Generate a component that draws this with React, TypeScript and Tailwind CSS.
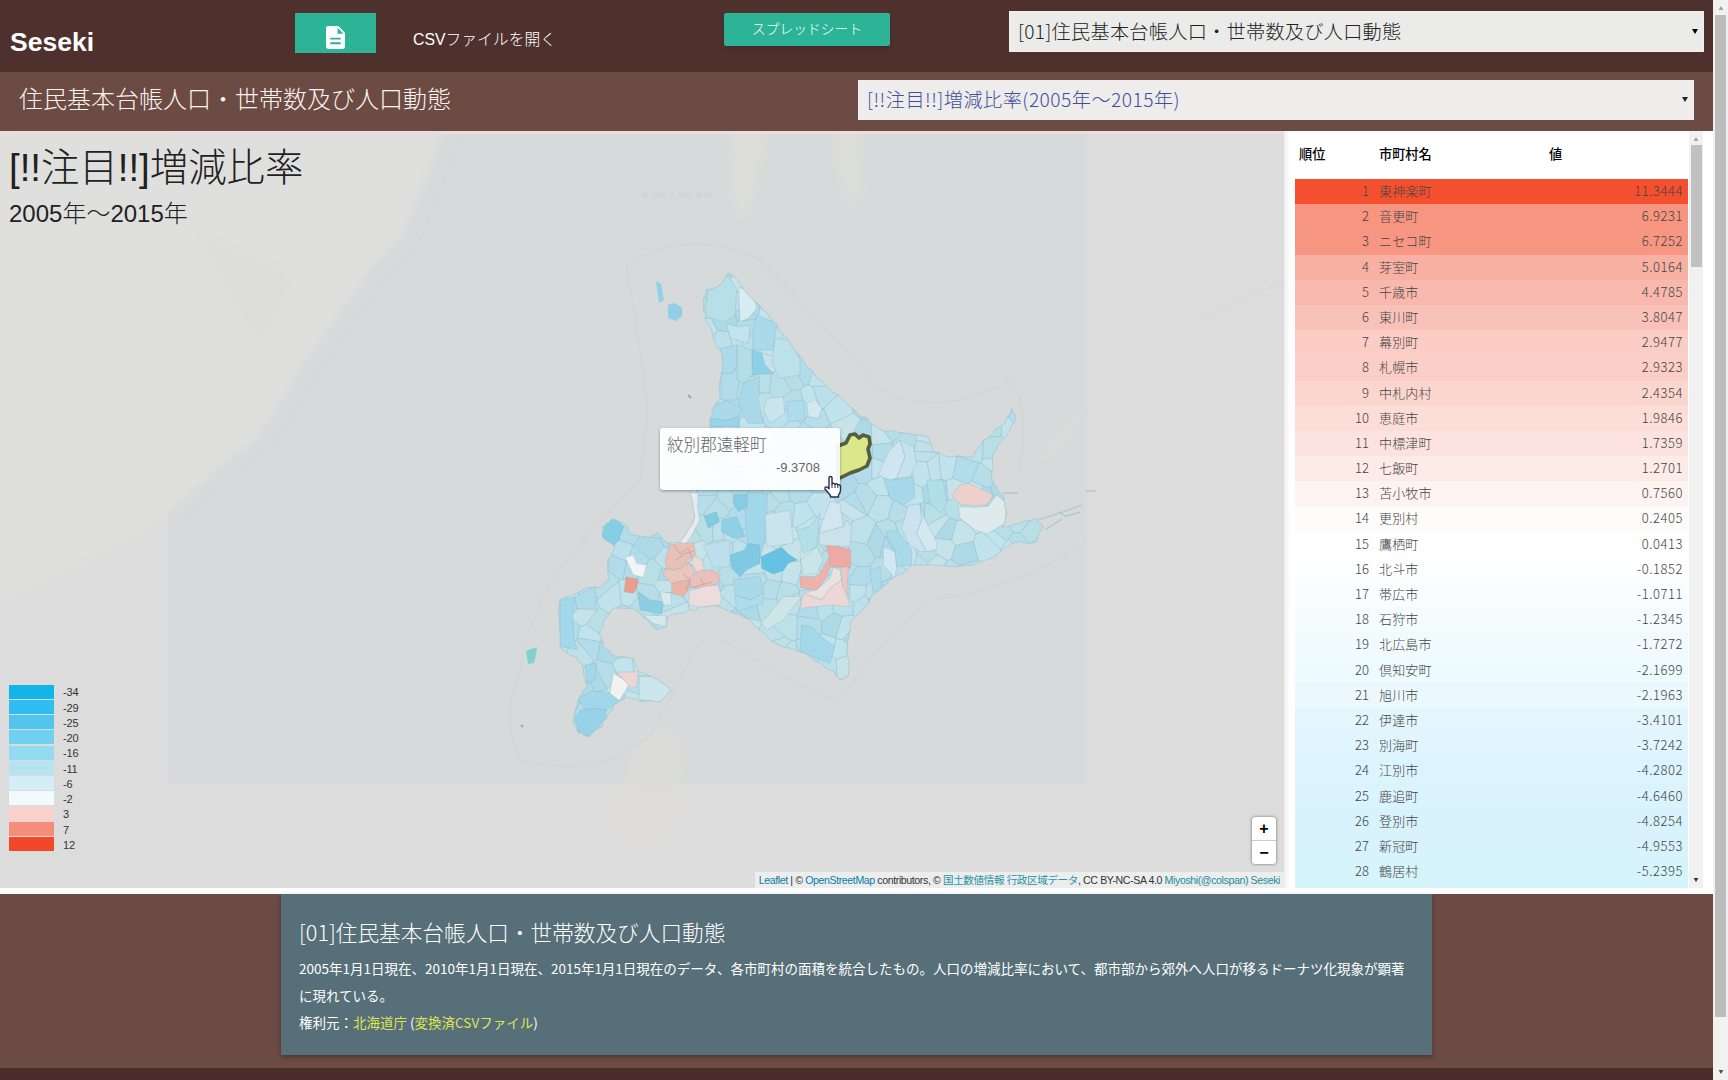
import React from "react";

type Pt = [number, number];

const rows: [string, string, string][] = [
  ["東神楽町", "11.3444", "#f4502f"],
  ["音更町", "6.9231", "#f79581"],
  ["ニセコ町", "6.7252", "#f79683"],
  ["芽室町", "5.0164", "#f8b0a3"],
  ["千歳市", "4.4785", "#f9b8ad"],
  ["東川町", "3.8047", "#f9c2b9"],
  ["幕別町", "2.9477", "#fbcdc5"],
  ["札幌市", "2.9323", "#fbcfc7"],
  ["中札内村", "2.4354", "#fbd6cf"],
  ["恵庭市", "1.9846", "#fcddd8"],
  ["中標津町", "1.7359", "#fde3df"],
  ["七飯町", "1.2701", "#fdebe8"],
  ["苫小牧市", "0.7560", "#fdf3f1"],
  ["更別村", "0.2405", "#fefcfa"],
  ["鷹栖町", "0.0413", "#fefefe"],
  ["北斗市", "-0.1852", "#fdfefe"],
  ["帯広市", "-1.0711", "#f9fdff"],
  ["石狩市", "-1.2345", "#f5fcfe"],
  ["北広島市", "-1.7272", "#f1fbfe"],
  ["倶知安町", "-2.1699", "#edfafe"],
  ["旭川市", "-2.1963", "#ebf9fe"],
  ["伊達市", "-3.4101", "#e3f5fd"],
  ["別海町", "-3.7242", "#e0f5fd"],
  ["江別市", "-4.2802", "#dcf4fd"],
  ["鹿追町", "-4.6460", "#daf3fd"],
  ["登別市", "-4.8254", "#d9f3fc"],
  ["新冠町", "-4.9553", "#d8f3fc"],
  ["鶴居村", "-5.2395", "#d6f4fb"],
];

const legend: [string, string][] = [
  ["-34", "#12b4ec"],
  ["-29", "#30bdf4"],
  ["-25", "#52c5ef"],
  ["-20", "#70d0f0"],
  ["-16", "#93dbf3"],
  ["-11", "#b5e4f0"],
  ["-6", "#d4edf7"],
  ["-2", "#f1fafc"],
  ["3", "#fbd0cb"],
  ["7", "#f68c7a"],
  ["12", "#f04829"],
];

const coastBase: Pt[] = [
  [706, 290], [717, 287], [728, 273], [735, 277], [743, 289], [757, 303], [767, 313], [777, 325], [787, 338], [797, 353],
  [807, 367], [817, 378], [828, 388], [843, 400], [857, 413], [870, 423], [884, 431], [897, 432], [927, 436], [933, 452],
  [950, 457], [973, 457], [980, 445], [993, 433], [1005, 423], [1012, 408], [1016, 417], [1010, 430], [998, 445], [992, 460],
  [992, 480], [1003, 495], [1007, 513], [1002, 527], [1020, 523], [1037, 518], [1043, 528], [1037, 542], [1013, 543],
  [1000, 552], [992, 558], [973, 565], [947, 566], [913, 565], [903, 573], [890, 580], [877, 592], [865, 607], [850, 622],
  [848, 640], [848, 677], [840, 679], [830, 670], [813, 660], [800, 652], [783, 647], [767, 637], [750, 620], [733, 613],
  [720, 607], [700, 607], [683, 613], [667, 617], [666, 627], [657, 630], [643, 617], [633, 608], [613, 608], [607, 617],
  [600, 630], [603, 647], [617, 657], [633, 658], [639, 672], [653, 677], [671, 690], [660, 702], [640, 702], [627, 697],
  [618, 702], [608, 713], [602, 727], [588, 737], [578, 733], [573, 720], [578, 700], [587, 687], [583, 667], [577, 657],
  [562, 650], [560, 633], [560, 600], [573, 595], [587, 587], [601, 588], [609, 578], [608, 560], [615, 547], [603, 538],
  [603, 527], [612, 519], [623, 523], [633, 535], [650, 538], [657, 532], [667, 543], [680, 542], [688, 530], [695, 517],
  [690, 493], [700, 470], [708, 440], [710, 423], [712, 410], [720, 400], [722, 353], [713, 337], [705, 317], [704, 305],
];

const tones = ["#bde0e9", "#b7dde9", "#c1e3ec", "#bbdfeb", "#aedae8", "#c6e3ea", "#b9dfe6", "#b3dcea"];

/** Deterministic pseudo-random value in [0, 1). */
function rand(n: number) {
  const v = Math.sin(n * 127.1 + 311.7) * 43758.5453;
  return v - Math.floor(v);
}

/** Splits every edge in three and nudges the new points for a ragged shore. */
const coast: Pt[] = coastBase.flatMap((p, i) => {
  const q = coastBase[(i + 1) % coastBase.length];
  const at = (t: number, k: number): Pt => [
    p[0] + (q[0] - p[0]) * t + (rand(i * 7 + k) - 0.5) * 3,
    p[1] + (q[1] - p[1]) * t + (rand(i * 11 + k + 3) - 0.5) * 3,
  ];
  return [p, at(0.33, 1), at(0.66, 2)];
});
const coastPoints = coast.map((p) => p.map((v) => v.toFixed(1)).join(",")).join(" ");

/** Keeps the part of a polygon that lies nearer to a than to b. */
function clipNear(poly: Pt[], a: Pt, b: Pt): Pt[] {
  const mx = (a[0] + b[0]) / 2;
  const my = (a[1] + b[1]) / 2;
  const side = (p: Pt) => (p[0] - mx) * (b[0] - a[0]) + (p[1] - my) * (b[1] - a[1]);
  const out: Pt[] = [];
  poly.forEach((p, i) => {
    const q = poly[(i + 1) % poly.length];
    const sp = side(p);
    const sq = side(q);
    if (sp <= 0) out.push(p);
    if (sp * sq < 0) {
      const t = sp / (sp - sq);
      out.push([p[0] + (q[0] - p[0]) * t, p[1] + (q[1] - p[1]) * t]);
    }
  });
  return out;
}

function makeCells() {
  const seeds: Pt[] = [];
  let n = 0;
  for (let y = 270; y < 745; y += 20)
    for (let x = 555; x < 1050; x += 18) {
      n += 1;
      seeds.push([x + (rand(n) - 0.5) * 20, y + (rand(n + 999) - 0.5) * 20]);
    }
  return seeds.map((s, i) => {
    let poly: Pt[] = [
      [s[0] - 30, s[1] - 30],
      [s[0] + 30, s[1] - 30],
      [s[0] + 30, s[1] + 30],
      [s[0] - 30, s[1] + 30],
    ];
    seeds.forEach((o, j) => {
      if (j !== i && Math.abs(o[0] - s[0]) < 62 && Math.abs(o[1] - s[1]) < 62) poly = clipNear(poly, s, o);
    });
    return { points: poly.map((p) => p.map((v) => v.toFixed(1)).join(",")).join(" "), fill: tones[Math.floor(rand(i + 50) * tones.length)] };
  });
}

const cells = makeCells();

const north: [string, string][] = [
  ["625,120 685,75 710,120 705,200 670,215 612,200", "#b6dfe8"],
  ["716,112 760,130 770,175 745,205 720,215", "#d8edf3"],
  ["680,222 715,230 750,225 745,280 690,265", "#c3e3f0"],
  ["770,195 830,220 820,300 757,300 760,230", "#a9d9eb"],
  ["757,300 785,310 795,345 820,370 757,374", "#8ecfea"],
  ["662,295 710,285 712,345 700,370 662,370", "#acdaea"],
  ["662,370 700,370 712,345 718,400 708,450 665,450", "#b2dce9"],
  ["712,285 755,300 757,374 730,400 712,390", "#b4dde8"],
  ["730,400 780,380 775,450 790,520 745,520 715,460", "#a9d9e9"],
  ["635,475 680,452 725,475 715,500 680,512 630,505", "#abd9ea"],
  ["630,505 680,512 715,500 720,530 630,530", "#9bd3ea"],
  ["825,265 870,270 900,330 900,375 840,385 815,340", "#bce1ea"],
  ["800,445 850,440 855,490 810,520 790,480", "#c9e4ec"],
  ["860,455 910,450 915,510 865,515", "#aedcec"],
  ["920,460 945,448 965,475 955,505 925,500", "#d3e9f0"],
];
const east: [string, string][] = [
  ["135,490 150,495 175,500 212,508 212,565 150,560 148,530", "#ecaaa2"],
  ["60,590 100,592 120,580 148,530 150,560 140,590 110,632 60,622", "#eeb2ab"],
  ["110,630 150,595 160,562 180,570 185,600 150,625 125,660 70,640", "#ebe2e0"],
  ["70,640 125,660 150,625 185,600 200,640 210,680 150,675 60,685", "#ebd8d6"],
  ["183,562 205,560 200,645 188,620", "#efc8c4"],
  ["515,348 540,315 562,310 590,320 640,345 622,375 580,378 540,372", "#ecd0cb"],
  ["535,380 590,382 625,378 650,345 680,370 675,430 620,462 585,450 540,415", "#dfeaec"],
  ["385,375 420,372 425,420 410,460 440,515 420,515 385,490 365,445", "#cbe3ee"],
  ["420,372 430,410 470,485 470,508 440,515 410,460 425,420", "#d3e8ef"],
  ["150,365 180,370 190,440 118,460 125,430", "#d3e5ef"],
  ["118,460 190,440 200,420 215,440 210,500 118,495", "#cbe2ea"],
  ["310,292 345,300 400,290 405,350 370,375 330,355", "#a5d8e8"],
  ["65,735 95,740 130,775 165,800 150,850 60,815", "#a4d7ea"],
  ["325,215 360,180 375,230 350,295 330,300 295,285", "#cfe5ef"],
  ["360,180 400,200 410,250 390,290 350,295 375,230", "#c6e2ee"],
  ["310,500 345,515 350,560 345,595 310,555", "#d0e8f1"],
  ["315,455 350,450 395,510 395,555 350,560 345,510", "#a8daea"],
  ["440,300 490,300 500,370 485,400 450,370", "#b1dfe8"],
  ["50,450 90,440 120,400 110,500 70,520", "#b4deea"],
  ["62,540 110,500 130,540 110,580 70,585", "#c9e5e9"],
  ["270,570 300,560 305,625 280,640", "#addbe9"],
];
const south: [string, string][] = [
  ["565,38 595,38 592,80 600,120 570,175 555,195 540,185 582,120", "#e8e9ea"],
  ["510,195 545,190 580,188 588,225 560,240 545,265 520,270 500,265 495,240", "#e9c0b6"],
  ["495,265 520,270 545,265 560,240 585,275 570,300 540,305 515,310 490,285", "#ebc6bd"],
  ["570,290 600,272 635,270 660,282 655,310 600,325 570,320", "#ecc0ba"],
  ["515,310 570,300 570,320 552,350 515,340", "#e9b5ab"],
  ["582,225 610,245 612,270 590,275 575,250", "#ecd9d3"],
  ["568,332 620,318 655,315 665,355 660,375 600,382 565,375", "#eadddb"],
  ["378,290 415,298 410,325 400,340 372,335", "#ea9d8d"],
  ["375,232 400,225 410,250 440,255 430,292 400,285", "#eff4f4"],
  ["742,38 802,40 800,120 790,200 780,235 745,200 735,120", "#a1d7e9"],
  ["690,225 735,210 745,190 780,195 780,250 740,270 720,290 695,265", "#80c9e3"],
  ["700,45 742,42 742,80 715,95 700,70", "#86cce2"],
  ["783,230 815,215 845,202 865,222 892,240 865,250 850,272 820,282 785,265", "#66c2e2"],
  ["612,108 650,95 658,125 625,145", "#82cce1"],
  ["665,120 710,110 735,170 700,175 665,155", "#8fd0e4"],
  ["303,140 340,115 372,140 355,180 340,200 308,172", "#84cfe3"],
  ["180,362 225,350 218,400 222,480 232,508 180,500", "#a3d7eb"],
  ["225,350 285,320 290,390 230,385", "#addbe9"],
  ["415,335 450,360 492,365 485,402 420,390", "#8bcde1"],
  ["480,335 512,340 515,375 490,375", "#d8eaee"],
  ["430,405 500,408 498,440 460,430", "#d5eaec"],
  ["235,655 275,632 330,640 360,665 320,690 285,685 255,690", "#a1d7eb"],
  ["222,720 240,690 285,685 320,690 315,715 270,770 240,762", "#98d2e8"],
  ["340,580 365,595 388,612 358,662 330,640", "#f2f3f1"],
  ["350,576 415,576 410,620 392,625 368,595", "#edd5d3"],
  ["418,590 465,590 515,630 480,668 418,658", "#cde5ec"],
  ["255,555 290,550 285,600 262,610", "#a3d7ea"],
  ["795,105 870,90 880,190 800,200", "#c9e4ed"],
  ["610,195 690,180 690,260 640,265", "#bddfec"],
  ["850,350 905,350 850,420 800,450 785,430", "#cfe6e9"],
  ["900,210 955,205 960,290 905,290", "#cbe5ea"],
  ["700,300 780,290 790,340 750,360 705,345", "#a9daea"],
  ["705,345 750,360 790,340 790,370 710,395", "#afdcea"],
];

const Region = ({ shapes }: { shapes: [string, string][] }) => (
  <>
    {shapes.map(([p, f]) => (
      <polygon key={p} points={p} fill={f} stroke="#7fa9b5" strokeOpacity={0.45} strokeWidth={1.8} strokeLinejoin="round" />
    ))}
  </>
);

function HokkaidoMap() {
  return (
    <svg className="block h-full w-full" viewBox="0 134 1284 754" preserveAspectRatio="none">
      <defs>
        <clipPath id="coast">
          <polygon points={coastPoints} />
        </clipPath>
        <filter id="soft" x="-20%" y="-20%" width="140%" height="140%">
          <feGaussianBlur stdDeviation="4" />
        </filter>
      </defs>
      <rect x="0" y="131" width="1284" height="757" fill="#dcdcdc" />
      <rect x="168" y="131" width="919" height="653" fill="#d6dada" />
      <path d="M0 131H442L425 178L402 235L372 268L330 325L300 368L278 405L255 440L215 470L168 515L90 560L0 600Z" fill="#dfe0de" filter="url(#soft)" />
      <path d="M442 131L425 178L402 235L372 268L330 325L300 368L278 405L255 440L215 470L168 515" fill="none" stroke="#d1d5d5" strokeWidth="2" transform="translate(18 5)" opacity=".45" />
      <path d="M195 230L240 250L290 270L285 310L258 345L230 300Z" fill="#dddedb" filter="url(#soft)" />
      <path d="M728 131H768L755 190L744 222L735 210Z M833 131H860L864 190L852 210L840 180Z" fill="#dddeda" filter="url(#soft)" />
      <path d="M1086 402L1066 425L1050 448L1030 470L1040 466L1068 440Z" fill="#dedddb" filter="url(#soft)" />
      <path d="M650 728L675 730L686 745V784L660 790L620 784L630 760Z" fill="#dbdcd9" filter="url(#soft)" />
      <path d="M610 790H690L680 830L640 860L605 830Z" fill="#dddcdb" filter="url(#soft)" />
      <path d="M1200 320L1284 280" stroke="#d6d2d4" strokeWidth="1" opacity=".6" />
      <path d="M642 195H712" stroke="#d2ccd3" strokeWidth="5" strokeDasharray="6 3 14 4" opacity=".35" />
      <g fill="none" stroke="#cfd3d3" strokeWidth="2" opacity=".45">
        <path d="M626 265Q690 225 760 260Q830 330 880 390Q940 420 1010 380Q1030 400 1020 470" />
        <path d="M626 265Q640 340 648 410L640 480Q590 530 560 570Q530 610 520 670Q500 720 520 760Q600 780 650 735L690 660Q700 625 740 650Q800 690 840 700Q880 640 930 600Q1020 590 1086 540" />
      </g>
      <polygon points={coastPoints} fill="#bbdfe9" />
      <g clipPath="url(#coast)">
        {cells.map((c, i) => (
          <polygon key={i} points={c.points} fill={c.fill} stroke="#86b0bb" strokeOpacity={0.42} strokeWidth={0.7} />
        ))}
        <g transform="translate(500 250) scale(.33333)">
          <Region shapes={north} />
        </g>
        <g transform="translate(500 480) scale(.33333)">
          <Region shapes={south} />
        </g>
        <g transform="translate(780 380) scale(.33333)">
          <Region shapes={east} />
        </g>
        <path d="M674 545L680 554L688 548L692 558L686 566M676 560L684 554L694 551M683 574L690 580L686 590M700 578L704 585M690 588L712 582" fill="none" stroke="#b99a96" strokeWidth=".9" opacity=".7" />
      </g>
      <polygon points={coastPoints} fill="none" stroke="#a3c4cc" strokeWidth=".7" />
      <path d="M656 281L661 284L664 300L659 303Z M668 305L675 303L682 308V316L676 321L668 318Z" fill="#93cfe6" />
      <path d="M526 651L531 649L537 647L536 655L534 663L528 664Z" fill="#86d0cb" />
      <path d="M1038 520L1060 513L1082 505M1045 530L1062 519M1058 512L1066 516L1080 512" fill="none" stroke="#a9c8cd" strokeWidth="1.3" />
      <path d="M1003 493H1018M1086 491H1096" stroke="#bfc3c1" strokeWidth="1.5" />
      <path d="M688 395L691 398M521 725L523 727" stroke="#93aeb0" strokeWidth="2" />
      <path
        d="M838 446L846 443L850 435L855 434L859 438L863 435L869 437L870 444L868 449L870 458L867 466L859 470L850 473L838 479Z"
        fill="#dbe78a"
        stroke="#555e3e"
        strokeWidth="3.6"
        strokeLinejoin="round"
      />
    </svg>
  );
}

const Caret = ({ className }: { className: string }) => (
  <svg className={className} viewBox="0 0 6 5">
    <path d="M0 0H6L3 5Z" fill="currentColor" />
  </svg>
);

export default function App() {
  return (
    <div className="flex h-[1080px] w-[1728px] overflow-hidden bg-white font-['Liberation_Sans','Noto_Sans_CJK_JP',sans-serif]">
      <div className="flex w-[1713px] flex-col">
        <header className="flex h-[72px] shrink-0 items-start bg-[#4e302d] text-white">
          <h1 className="mt-[24px] ml-[10px] w-[285px] text-[26.5px] leading-[36px] font-bold">Seseki</h1>
          <button className="mt-[13px] flex h-[40px] w-[81px] items-center justify-center bg-[#2db396] pt-[8px]">
            <svg className="h-[23px] w-[19px]" viewBox="0 0 20 24">
              <path d="M3 0H13L20 7V21.5Q20 24 17.5 24H2.5Q0 24 0 21.5V2.5Q0 0 3 0Z" fill="#fff" />
              <path d="M12.2 1.8V8H18.4Z M4.5 12.2H15.5V14.2H4.5Z M4.5 17H15.5V19H4.5Z" fill="#2db396" />
            </svg>
          </button>
          <span className="mt-[28px] ml-[37px] w-[311px] text-[15.8px] leading-[24px] font-light whitespace-nowrap">CSVファイルを開く</span>
          <button className="mt-[13px] h-[33px] w-[166px] rounded-[2px] bg-[#2db396] text-[13.8px] leading-[33px] font-light whitespace-nowrap shadow-md">スプレッドシート</button>
          <div className="mt-[11px] ml-[119px] flex h-[41px] w-[695px] items-center justify-between border border-[#f6eeeb] bg-[#ebebe9] pr-[5px] pl-[8px] font-['Noto_Sans_CJK_JP',sans-serif] text-[19.2px] font-light text-[#222]">
            <span className="tracking-[0.25px]">[01]住民基本台帳人口・世帯数及び人口動態</span>
            <Caret className="h-[5px] w-[6px] text-black" />
          </div>
        </header>

        <nav className="flex h-[59px] shrink-0 items-start justify-between bg-[#6b4b43] pr-[19px] pl-[19px]">
          <h2 className="mt-[10px] text-[24px] leading-[36px] font-light text-[#fdf3f0]">住民基本台帳人口・世帯数及び人口動態</h2>
          <div className="mt-[8px] flex h-[40px] w-[836px] items-center justify-between bg-[#efecec] pr-[6px] pb-[2px] pl-[9px] font-['Noto_Sans_CJK_JP',sans-serif] text-[19.2px] font-light text-[#3f4f9c]">
            <span className="tracking-[0.46px]">[!!注目!!]増減比率(2005年～2015年)</span>
            <Caret className="h-[5px] w-[6px] text-[#222]" />
          </div>
        </nav>

        <main className="flex h-[763px] shrink-0 bg-white">
          <section className="relative h-[757px] w-[1284px] border-t-[3px] border-[#ecdcdd]">
            <HokkaidoMap />
            <div className="absolute top-[6px] left-[9px] text-[#212121]">
              <div className="text-[38.4px] leading-[56px] font-light">[!!注目!!]増減比率</div>
              <div className="pt-[1px] text-[24px] leading-[34px] font-light">2005年～2015年</div>
            </div>

            <ul className="absolute top-[550px] left-[9px]">
              {legend.map(([label, color]) => (
                <li key={label} className="flex h-[15.25px] items-center">
                  <span className="block h-[14px] w-[45px]" style={{ background: color }} />
                  <span className="mt-[2px] ml-[9px] text-[11px] tracking-[-0.2px] text-[#333]">{label}</span>
                </li>
              ))}
            </ul>

            <div className="absolute top-[294px] left-[660px] h-[62px] w-[180px] rounded-[3px] bg-white/93 px-[7px] pt-[5px] text-[#666] shadow-[0_1px_3px_rgba(0,0,0,0.35)]">
              <div className="text-[16.6px] leading-[25px] font-light">紋別郡遠軽町</div>
              <div className="pr-[13px] text-right text-[13px] leading-[19px]">-9.3708</div>
            </div>
            <svg className="absolute top-[341px] left-[823px] h-[23px] w-[20px]" viewBox="0 0 20 23">
              <path
                d="M6 2.5Q7.5 .5 9 2.5V9Q10.5 7.5 12 9.3Q13.5 8 14.8 9.8Q17 9 17.5 11.5V15Q17.5 18 15.5 20V22H7.5V20.5L2 14Q1.5 11.5 4 12L6 13.7Z"
                fill="#fff"
                stroke="#2b2b50"
                strokeWidth="1.4"
                strokeLinejoin="round"
              />
              <path d="M9 9V13M12 9.5V13M14.8 10V13" stroke="#2b2b50" strokeWidth="1" />
            </svg>

            <div className="absolute right-[8px] bottom-[24px] flex w-[24px] flex-col rounded-[3px] bg-white text-center font-bold text-black shadow-[0_0_3px_rgba(0,0,0,0.55)]">
              <button className="h-[24px] border-b border-[#ccc] text-[16px] leading-[23px]">+</button>
              <button className="h-[23px] text-[16px] leading-[21px]">−</button>
            </div>

            <div className="absolute right-0 bottom-0 h-[16px] bg-[#f0f3f3]/80 px-[4px] text-[10.6px] leading-[16px] tracking-[-0.4px] whitespace-nowrap text-[#333]">
              <a className="text-[#0b7aa9]">Leaflet</a> | © <a className="text-[#0b7aa9]">OpenStreetMap</a> contributors, ©{" "}
              <a className="text-[#2a93a4]">国土数値情報 行政区域データ</a>, CC BY-NC-SA 4.0 <a className="text-[#1d8a9c]">Miyoshi(@colspan)</a>{" "}
              <a className="text-[#1d8a9c]">Seseki</a>
            </div>
          </section>

          <section className="flex h-[757px] w-[429px] overflow-hidden shadow-[inset_6px_0_6px_-5px_rgba(0,0,0,0.12)]">
            <div className="ml-[11px] w-[393px] text-[13px] text-[#444]">
              <div className="flex h-[48px] items-center text-[13.2px] font-medium text-black">
                <span className="w-[84px] pl-[4px]">順位</span>
                <span className="w-[170px]">市町村名</span>
                <span>値</span>
              </div>
              <div className="font-['Noto_Sans_CJK_JP','Noto_Sans',sans-serif] font-light">
                {rows.map(([name, value, color], i) => (
                  <div key={name} className="h-[25.2px]" style={{ background: color }}>
                    <div className="flex leading-[23.4px]">
                      <span className="w-[74px] text-right">{i + 1}</span>
                      <span className="ml-[10px] w-[180px] tracking-[0.15px]">{name}</span>
                      <span className="flex-1 pr-[5px] text-right tracking-[0.55px]">{value}</span>
                    </div>
                  </div>
                ))}
                <div className="h-[4px] bg-[#d6f4fb]" />
              </div>
            </div>
            <div className="ml-[1px] flex w-[14px] flex-col items-center justify-between bg-[#f1f1f1] pt-[6px] pb-[6px]">
              <div className="flex flex-col items-center gap-[4px]">
                <Caret className="h-[4px] w-[6px] rotate-180 text-[#a0a0a0]" />
                <div className="h-[122px] w-[11px] bg-[#c1c1c1]" />
              </div>
              <Caret className="h-[4px] w-[6px] text-[#333]" />
            </div>
          </section>
        </main>

        <div className="flex h-[174px] shrink-0 items-start bg-[#6b4b43] pl-[281px]">
          <article className="h-[161px] w-[1151px] bg-[#566f78] px-[18px] pt-[19px] text-white shadow-[0_2px_5px_rgba(0,0,0,0.3)]">
            <h3 className="font-['Noto_Sans_CJK_JP',sans-serif] text-[21.65px] leading-[38px] font-light">[01]住民基本台帳人口・世帯数及び人口動態</h3>
            <p className="mt-[4px] font-['Noto_Sans_CJK_JP',sans-serif] text-[13.5px] leading-[27px] whitespace-nowrap">
              2005年1月1日現在、2010年1月1日現在、2015年1月1日現在のデータ、各市町村の面積を統合したもの。人口の増減比率において、都市部から郊外へ人口が移るドーナツ化現象が顕著
              <br />
              に現れている。
              <br />
              権利元：<a className="text-[#dfe653]">北海道庁</a> (<a className="text-[#dfe653]">変換済CSVファイル</a>)
            </p>
          </article>
        </div>
        <footer className="h-[12px] shrink-0 bg-[#4b2d2b]" />
      </div>

      <div className="flex w-[15px] flex-col items-center justify-between bg-[#f1f1f1] py-[6px]">
        <div className="flex flex-col items-center gap-[5px]">
          <Caret className="h-[4px] w-[6px] rotate-180 text-[#a0a0a0]" />
          <div className="h-[1002px] w-[11px] bg-[#bdbdbd]" />
        </div>
        <Caret className="h-[4px] w-[6px] text-[#505050]" />
      </div>
    </div>
  );
}
